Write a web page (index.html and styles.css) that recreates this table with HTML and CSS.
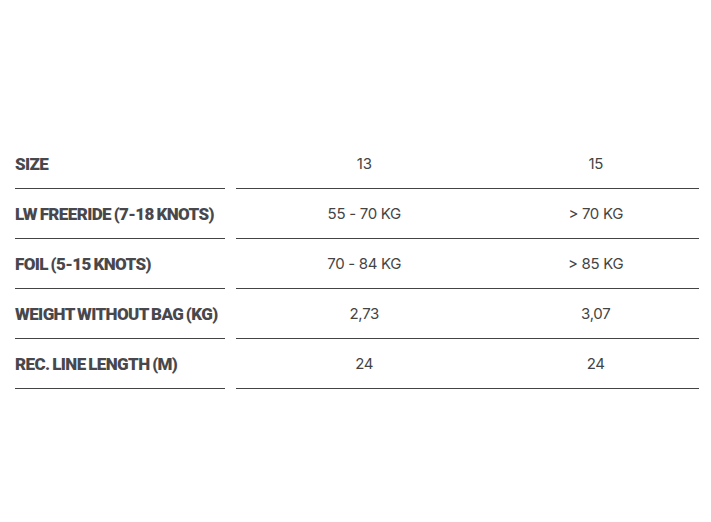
FILE: index.html
```html
<!DOCTYPE html>
<html>
<head>
<meta charset="utf-8">
<link rel="stylesheet" href="styles.css">
</head>
<body>
<div class="specs">
  <div class="row">
    <div class="label">SIZE</div>
    <div class="vals"><div class="val">13</div><div class="val">15</div></div>
  </div>
  <div class="row">
    <div class="label">LW FREERIDE (7-18 KNOTS)</div>
    <div class="vals"><div class="val">55 - 70 KG</div><div class="val">&gt; 70 KG</div></div>
  </div>
  <div class="row">
    <div class="label">FOIL (5-15 KNOTS)</div>
    <div class="vals"><div class="val">70 - 84 KG</div><div class="val">&gt; 85 KG</div></div>
  </div>
  <div class="row">
    <div class="label">WEIGHT WITHOUT BAG (KG)</div>
    <div class="vals"><div class="val">2,73</div><div class="val">3,07</div></div>
  </div>
  <div class="row">
    <div class="label">REC. LINE LENGTH (M)</div>
    <div class="vals"><div class="val">24</div><div class="val">24</div></div>
  </div>
</div>
</body>
</html>
```
FILE: styles.css
```css
html, body {
  margin: 0;
  padding: 0;
  background: #fff;
}
.specs {
  padding: 139px 12px 0 15px;
  display: flex;
  flex-direction: column;
}
.row {
  display: grid;
  grid-template-columns: 210px 1fr;
  column-gap: 11px;
  height: 50px;
}
.label, .vals {
  border-bottom: 1px solid #444;
  box-sizing: border-box;
}
.label {
  display: flex;
  align-items: center;
  font-family: "Roboto", sans-serif;
  font-weight: 900;
  font-size: 17px;
  letter-spacing: -0.6px;
  word-spacing: -1px;
  color: #48484c;
}
.vals {
  display: grid;
  grid-template-columns: 1fr 1fr;
}
.val {
  display: flex;
  align-items: center;
  justify-content: center;
  padding-left: 25px;
  font-family: "Inter", sans-serif;
  font-size: 15px;
  color: #444;
  letter-spacing: -0.3px;
}
```
